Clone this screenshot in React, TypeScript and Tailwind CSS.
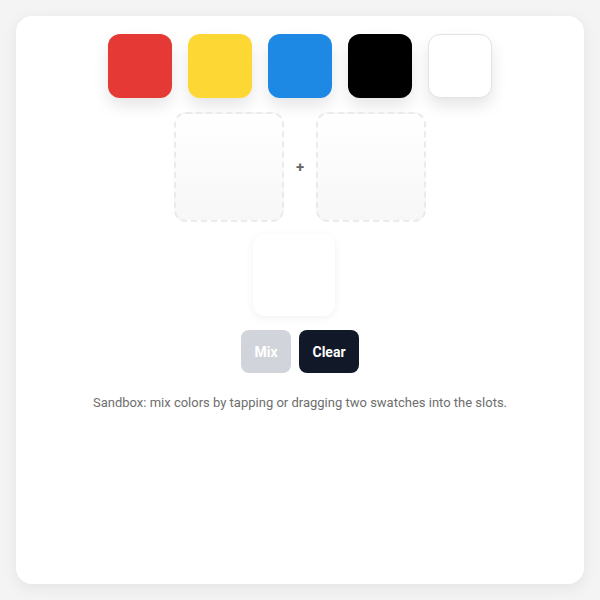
import { useState } from 'react'

const SWATCHES = [
  { name: 'red', bg: 'bg-[#e53935]', border: '' },
  { name: 'yellow', bg: 'bg-[#fdd835]', border: '' },
  { name: 'blue', bg: 'bg-[#1e88e5]', border: '' },
  { name: 'black', bg: 'bg-black', border: '' },
  { name: 'white', bg: 'bg-white', border: 'border border-[#e2e2e2]' },
]

export default function App() {
  const [slots, setSlots] = useState<(string | null)[]>([null, null])

  function pick(name: string) {
    setSlots(s => (s[0] === null ? [name, s[1]] : s[1] === null ? [s[0], name] : s))
  }

  return (
    <div className="min-h-[600px] bg-[#f4f4f5] p-4" style={{ fontFamily: 'Roboto, "Liberation Sans", sans-serif' }}>
      <div className="h-[568px] rounded-2xl bg-white shadow-[0_4px_16px_rgba(0,0,0,0.07)] flex flex-col items-center pt-[18px]">
        {/* palette */}
        <div className="flex gap-4">
          {SWATCHES.map(s => (
            <button
              key={s.name}
              onClick={() => pick(s.name)}
              className={`w-16 h-16 rounded-xl ${s.bg} ${s.border} shadow-[0_8px_16px_rgba(0,0,0,0.1)]`}
            />
          ))}
        </div>

        {/* mixing slots */}
        <div className="mt-[14px] flex items-center gap-3">
          {slots.map((_, i) => (
            <div key={i} className="contents">
              {i === 1 && <span className="text-[15px] font-bold text-[#666] w-2 text-center">+</span>}
              <div className="w-[110px] h-[110px] rounded-xl border-2 border-dashed border-[#ebebeb] bg-gradient-to-b from-white to-[#f7f7f7]" />
            </div>
          ))}
        </div>

        {/* result */}
        <div className="mt-3 mr-3 w-[82px] h-[82px] rounded-xl bg-white shadow-[0_2px_10px_rgba(0,0,0,0.06)]" />

        <div className="mt-[14px] flex gap-2">
          <button className="h-[43px] w-[50px] rounded-lg bg-[#d1d5db] text-white text-sm font-bold">Mix</button>
          <button
            onClick={() => setSlots([null, null])}
            className="h-[43px] w-[60px] rounded-lg bg-[#111827] text-white text-sm font-bold"
          >
            Clear
          </button>
        </div>

        <p className="mt-[20px] text-[13px] text-[#6e6e6e]">
          Sandbox: mix colors by tapping or dragging two swatches into the slots.
        </p>
      </div>
    </div>
  )
}
